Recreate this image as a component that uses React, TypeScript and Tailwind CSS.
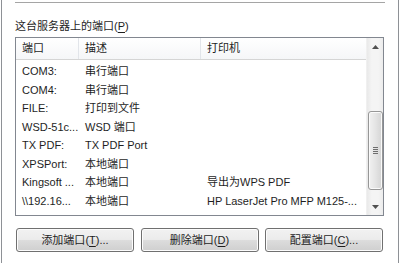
import React from "react";

const rows: [string, string, string][] = [
  ["COM3:", "串行端口", ""],
  ["COM4:", "串行端口", ""],
  ["FILE:", "打印到文件", ""],
  ["WSD-51c...", "WSD 端口", ""],
  ["TX PDF:", "TX PDF Port", ""],
  ["XPSPort:", "本地端口", ""],
  ["Kingsoft ...", "本地端口", "导出为WPS PDF"],
  ["\\\\192.16...", "本地端口", "HP LaserJet Pro MFP M125-..."],
];

function Btn({ label, k, dots }: { label: string; k: string; dots?: boolean }) {
  return (
    <div className="w-[118px] h-[24px] rounded-[3px] border border-[#707070] bg-[linear-gradient(#f2f2f2_0%,#ebebeb_50%,#dddddd_50%,#cfcfcf_100%)] shadow-[inset_0_0_0_1px_#fcfcfc] flex items-center justify-center text-[11px] text-[#1e1e1e]">
      {label}(<span className="underline underline-offset-2">{k}</span>){dots ? "..." : ""}
    </div>
  );
}

export default function App() {
  return (
    <div
      className="w-[400px] h-[263px] bg-white overflow-hidden"
      style={{ fontFamily: '"Liberation Sans", "Noto Sans CJK SC", sans-serif' }}
    >
      <div className="ml-[1px] w-[398px] h-full border-l border-r border-[#8e9196] flex flex-col pl-[13px]">
        <div className="mt-[2px] h-px w-[370px] bg-[#a5a5a5]" />
        <div className="mt-[15px] h-[16px] leading-[16px] text-[11px] text-[#1e1e1e]">
          这台服务器上的端口(<span className="underline underline-offset-2">P</span>)
        </div>
        <div className="mt-[3px] w-[369px] h-[179px] border border-[#828790] flex text-[11px] text-[#1e1e1e]">
          <div className="flex-1 flex flex-col overflow-hidden">
            <div className="h-[22px] flex border-b border-[#d5d5d5] bg-[linear-gradient(#ffffff,#f5f6f8)]">
              <div className="w-[63px] pl-[6px] flex items-center border-r border-[#e2e5ea]">端口</div>
              <div className="w-[122px] pl-[6px] flex items-center border-r border-[#e2e5ea]">描述</div>
              <div className="flex-1 pl-[6px] flex items-center">打印机</div>
            </div>
            <div className="pt-[2px]">
              {rows.map((r, i) => (
                <div key={i} className="h-[18.5px] flex items-center whitespace-nowrap">
                  <div className="w-[63px] pl-[6px] overflow-hidden">{r[0]}</div>
                  <div className="w-[122px] pl-[6px] overflow-hidden">{r[1]}</div>
                  <div className="flex-1 pl-[6px] overflow-hidden">{r[2]}</div>
                </div>
              ))}
            </div>
          </div>
          <div className="w-[17px] h-full bg-[linear-gradient(90deg,#e9e9e9,#f4f4f4_30%,#f4f4f4_70%,#ececec)] border-l border-[#f0f0f0] flex flex-col items-center">
            <div className="h-[17px] flex items-center justify-center">
              <svg width="7" height="4" viewBox="0 0 7 4"><path d="M3.5 0 L7 4 L0 4 Z" fill="#505050" /></svg>
            </div>
            <div className="mt-[56px] w-[15px] h-[79px] rounded-[3px] border border-[#979797] bg-[linear-gradient(90deg,#f1f1f1,#e4e4e4_50%,#d4d4d4)] shadow-[inset_0_0_0_1px_#fafafa] flex flex-col items-center justify-center gap-[1px]">
              <div className="w-[5px] h-px bg-[#6e6e6e]" />
              <div className="w-[5px] h-px bg-[#6e6e6e]" />
              <div className="w-[5px] h-px bg-[#6e6e6e]" />
              <div className="w-[5px] h-px bg-[#6e6e6e]" />
            </div>
            <div className="flex-1" />
            <div className="h-[17px] flex items-center justify-center">
              <svg width="7" height="4" viewBox="0 0 7 4"><path d="M0 0 L7 0 L3.5 4 Z" fill="#505050" /></svg>
            </div>
          </div>
        </div>
        <div className="mt-[12px] w-[369px] flex justify-between pl-[1px] pr-[1px]">
          <Btn label="添加端口" k="T" dots />
          <Btn label="删除端口" k="D" />
          <Btn label="配置端口" k="C" dots />
        </div>
      </div>
    </div>
  );
}
